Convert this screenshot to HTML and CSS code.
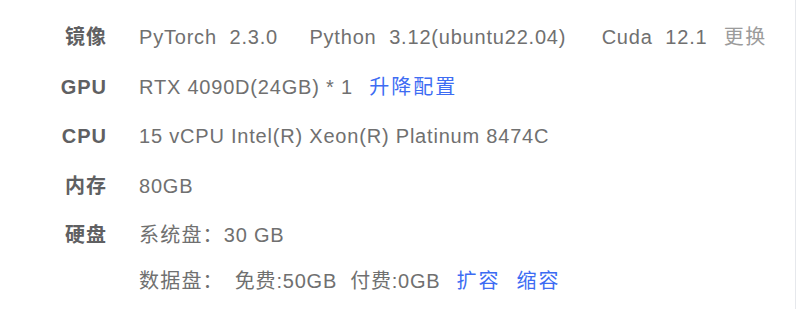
FILE: index.html
```html
<!DOCTYPE html>
<html lang="zh-CN">
<head>
<meta charset="utf-8">
<title>配置</title>
<link rel="stylesheet" href="styles.css">
</head>
<body>
<div class="panel">
  <div class="row">
    <div class="label">镜像</div>
    <div class="value">
      <span class="item">PyTorch&nbsp;&nbsp;2.3.0</span>
      <span class="item">Python&nbsp;&nbsp;3.12(ubuntu22.04)</span>
      <span class="item">Cuda&nbsp;&nbsp;12.1</span>
      <span class="muted">更换</span>
    </div>
  </div>
  <div class="row">
    <div class="label">GPU</div>
    <div class="value">RTX 4090D(24GB) * 1 <a class="link">升降配置</a></div>
  </div>
  <div class="row">
    <div class="label">CPU</div>
    <div class="value">15 vCPU Intel(R) Xeon(R) Platinum 8474C</div>
  </div>
  <div class="row">
    <div class="label">内存</div>
    <div class="value">80GB</div>
  </div>
  <div class="row">
    <div class="label">硬盘</div>
    <div class="value disk">
      <div class="line"><span class="cn">系统盘：</span>30 GB</div>
      <div class="line"><span class="cn">数据盘：</span><span class="gap">免费:50GB</span><span class="gap">付费:0GB</span><a class="link">扩容</a><a class="link">缩容</a></div>
    </div>
  </div>
</div>
</body>
</html>
```
FILE: styles.css
```css
html, body {
  margin: 0;
  padding: 0;
  background: #fff;
}
body {
  font-family: "Liberation Sans", Arial, "Noto Sans CJK SC", sans-serif;
  font-size: 20px;
  color: #707070;
}
.panel {
  width: 796px;
  height: 309px;
  box-sizing: border-box;
  border-right: 1px solid #e6e8ec;
  padding-top: 23px;
  display: flex;
  flex-direction: column;
  gap: 21.6px;
}
.row {
  display: flex;
  align-items: flex-start;
  line-height: 28px;
}
.label {
  width: 107px;
  text-align: right;
  font-weight: bold;
  color: #5f6062;
  flex: none;
  letter-spacing: 1px;
}
.value {
  margin-left: 32px;
  letter-spacing: 0.8px;
  white-space: nowrap;
}
.item {
  margin-right: 25px;
}
.item:nth-child(2) {
  margin-right: 29px;
}
.item:nth-child(3) {
  margin-right: 10px;
}
.muted {
  color: #9b9b9b;
  letter-spacing: 1.5px;
}
.cn {
  letter-spacing: 1.2px;
}
.link {
  color: #3d6cf3;
  margin-left: 10px;
  letter-spacing: 2px;
  cursor: pointer;
}
.disk {
  display: flex;
  flex-direction: column;
  gap: 18px;
}
.gap {
  margin-left: 11px;
}
.gap + .gap {
  margin-left: 13px;
}
.disk .link {
  margin-left: 16px;
}
.disk .link + .link {
  margin-left: 16px;
}
```
